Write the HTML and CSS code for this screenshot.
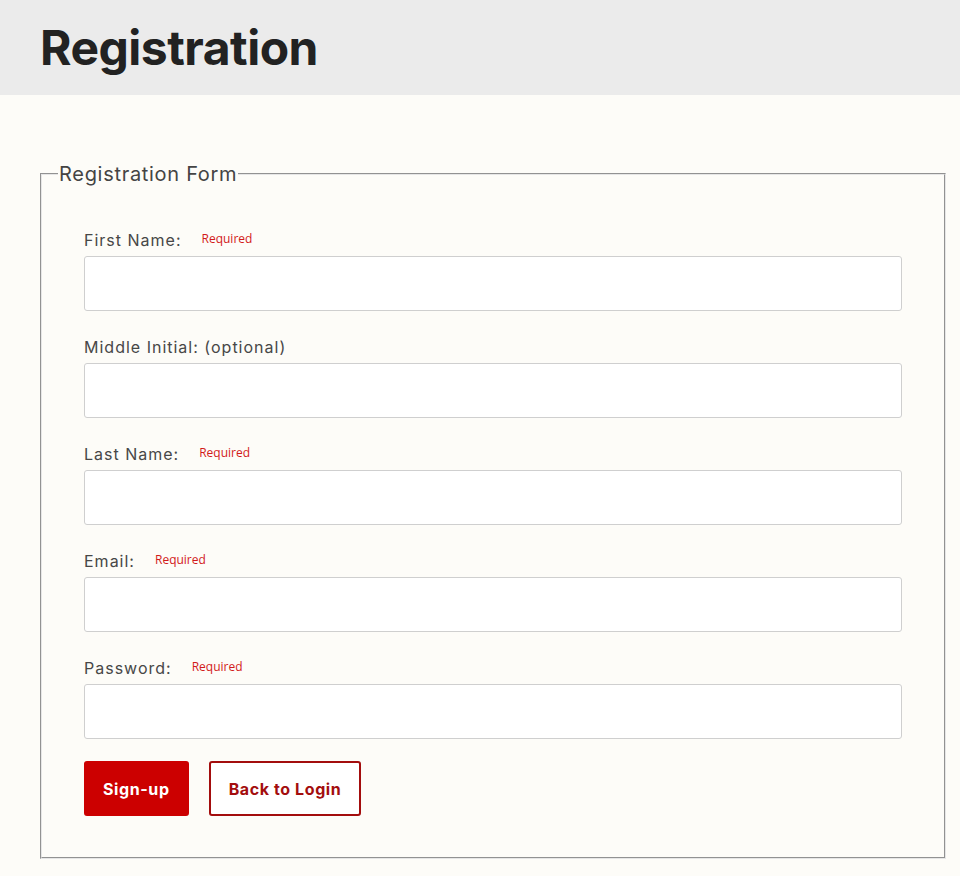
FILE: index.html
```html
<!DOCTYPE html>
<html lang="en">
<head>
<meta charset="utf-8">
<title>Registration</title>
<link rel="stylesheet" href="styles.css">
</head>
<body>
<header class="page-header">
  <h1 class="page-title">Registration</h1>
</header>
<main class="page-main">
  <form class="reg-form">
    <fieldset class="reg-fieldset">
      <legend class="reg-legend">Registration Form</legend>
      <div class="field">
        <div class="field-label"><label for="fn">First Name:</label><span class="req">Required</span></div>
        <input class="field-input" id="fn" type="text">
      </div>
      <div class="field">
        <div class="field-label"><label for="mi">Middle Initial: (optional)</label></div>
        <input class="field-input" id="mi" type="text">
      </div>
      <div class="field">
        <div class="field-label"><label for="ln">Last Name:</label><span class="req">Required</span></div>
        <input class="field-input" id="ln" type="text">
      </div>
      <div class="field">
        <div class="field-label"><label for="em">Email:</label><span class="req">Required</span></div>
        <input class="field-input" id="em" type="email">
      </div>
      <div class="field field-last">
        <div class="field-label"><label for="pw">Password:</label><span class="req">Required</span></div>
        <input class="field-input" id="pw" type="password">
      </div>
      <div class="actions">
        <button class="btn btn-primary" type="button">Sign-up</button>
        <button class="btn btn-outline" type="button">Back to Login</button>
      </div>
    </fieldset>
  </form>
</main>
</body>
</html>
```
FILE: styles.css
```css
* { box-sizing: border-box; }
html, body { margin: 0; padding: 0; }
body {
  background: #fdfcf8;
  font-family: "Inter", "Open Sans", "Liberation Sans", sans-serif;
  color: #444;
}
.page-header {
  background: #ebebeb;
  height: 95px;
  padding: 0 40px;
  display: flex;
  align-items: center;
}
.page-title {
  margin: 0;
  font-size: 48px;
  font-weight: 700;
  color: #222;
  letter-spacing: -0.5px;
}
.page-main {
  padding: 67px 14px 0 40px;
}
.reg-form { margin: 0; }
.reg-fieldset {
  margin: 0;
  border: 2px groove #e6e6e6;
  padding: 42px 42px 41px 42px;
}
.reg-legend {
  font-size: 20px;
  line-height: 24px;
  padding: 0 1px;
  margin-left: -26px;
  color: #444;
  letter-spacing: 0.7px;
}
.field { margin-bottom: 24px; }
.field-last { margin-bottom: 22px; }
.field-label {
  display: flex;
  align-items: flex-start;
  height: 24px;
  line-height: 24px;
  margin-bottom: 4px;
  font-size: 16px;
  letter-spacing: 1px;
  color: #474747;
}
.req {
  font-family: "Open Sans", "Liberation Sans", sans-serif;
  font-size: 12px;
  line-height: 18px;
  margin-top: 2px;
  letter-spacing: 0;
  color: #d21a1a;
  margin-left: 20px;
}
.field-input {
  display: block;
  width: 100%;
  height: 55px;
  border: 1px solid #cfcfcf;
  border-radius: 3px;
  background: #fff;
  font: inherit;
}
.actions {
  display: flex;
  gap: 20px;
}
.btn {
  height: 55px;
  border-radius: 3px;
  font-family: inherit;
  font-size: 16px;
  font-weight: 700;
  letter-spacing: 0.6px;
  padding: 0 17px;
  cursor: pointer;
}
.btn-primary {
  background: #cc0000;
  border: 2px solid #cc0000;
  color: #fff;
}
.btn-outline {
  background: #fff;
  border: 2px solid #a30d0d;
  color: #a30d0d;
  padding: 0 18px;
}
```
